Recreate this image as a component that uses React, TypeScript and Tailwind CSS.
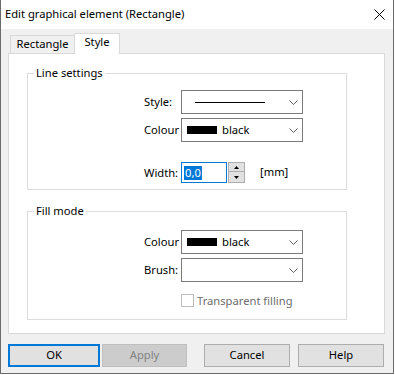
import React from "react"

const font = { fontFamily: '"Noto Sans", "Open Sans", sans-serif' }

function Chevron() {
    return (
        <svg width="9" height="5" viewBox="0 0 9 5" className="shrink-0">
            <path d="M0.5 0.5 L4.5 4.5 L8.5 0.5" fill="none" stroke="#606060" strokeWidth="1" />
        </svg>
    )
}

function Combo({ children }: { children?: React.ReactNode }) {
    return (
        <div className="flex items-center w-[122px] h-[24px] bg-white border border-[#7a7a7a] pl-[5px] pr-[4px]">
            <div className="flex-1 flex items-center min-w-0">{children}</div>
            <Chevron />
        </div>
    )
}

function ColourValue() {
    return (
        <div className="flex items-center gap-[5px]">
            <div className="w-[30px] h-[8px] bg-black" />
            <span className="text-[11.2px] leading-none text-black">black</span>
        </div>
    )
}

function Row({ label, children, className = "" }: { label: string; children: React.ReactNode; className?: string }) {
    return (
        <div className={"flex items-center " + className}>
            <span className="w-[37px] text-[11.2px] text-black leading-none">{label}</span>
            {children}
        </div>
    )
}

function Group({ title, className, children }: { title: string; className: string; children: React.ReactNode }) {
    return (
        <div className={"relative ml-[18px] w-[320px] border border-[#dcdcdc] pl-[116px] " + className}>
            <span className="absolute -top-[9px] left-[6px] bg-white px-[2px] text-[11.2px] leading-[16px] text-black">
                {title}
            </span>
            {children}
        </div>
    )
}

export default function App() {
    return (
        <div className="w-[395px] h-[375px] bg-white" style={font}>
            <div className="w-[394px] h-[374px] bg-[#f0f0f0] border-l border-r border-b border-[#6b6b6b] flex flex-col">
                {/* Title bar */}
                <div className="h-[29px] bg-white flex items-center justify-between pl-[4px] pr-[8px] shrink-0">
                    <span className="text-[11.2px] text-black">Edit graphical element (Rectangle)</span>
                    <svg width="11" height="11" viewBox="0 0 11 11">
                        <path d="M0.5 0.5 L10.5 10.5 M10.5 0.5 L0.5 10.5" stroke="#000" strokeWidth="1" />
                    </svg>
                </div>

                {/* Tabs */}
                <div className="h-[24px] flex items-end pl-[9px] shrink-0">
                    <div className="h-[18px] w-[65px] border border-b-0 border-[#d9d9d9] bg-[#f0f0f0] flex items-center justify-center text-[11.2px] text-black">
                        Rectangle
                    </div>
                    <div className="relative z-10 -mb-px -ml-px h-[21px] w-[46px] border border-b-0 border-[#d9d9d9] bg-white flex items-center justify-center pb-[3px] text-[11.2px] text-black">
                        Style
                    </div>
                </div>

                {/* Panel */}
                <div className="ml-[7px] w-[377px] h-[281px] bg-white border border-[#d9d9d9] shrink-0">
                    <Group title="Line settings" className="mt-[19px] h-[117px] pt-[16px]">
                        <Row label="Style:">
                            <Combo>
                                <div className="ml-[8px] w-[70px] h-px bg-black" />
                            </Combo>
                        </Row>
                        <Row label="Colour" className="mt-[4px]">
                            <Combo>
                                <ColourValue />
                            </Combo>
                        </Row>
                        <Row label="Width:" className="mt-[20px]">
                            <div className="flex items-center">
                                <div className="w-[46px] h-[21px] border border-[#0078d7] bg-white flex items-center pl-[2px]">
                                    <span className="bg-[#0078d7] text-white text-[11.2px] leading-[14px] px-px">0,0</span>
                                </div>
                                <div className="ml-px w-[17px] h-[21px] flex flex-col">
                                    <div className="h-[10px] border border-[#adadad] bg-[#e1e1e1] flex items-center justify-center">
                                        <svg width="5" height="3" viewBox="0 0 5 3"><path d="M2.5 0 L5 3 L0 3 Z" fill="#000" /></svg>
                                    </div>
                                    <div className="h-[11px] border border-t-0 border-[#adadad] bg-[#e1e1e1] flex items-center justify-center">
                                        <svg width="5" height="3" viewBox="0 0 5 3"><path d="M0 0 L5 0 L2.5 3 Z" fill="#000" /></svg>
                                    </div>
                                </div>
                                <span className="ml-[15px] text-[11.2px] text-black">[mm]</span>
                            </div>
                        </Row>
                    </Group>

                    <Group title="Fill mode" className="mt-[21px] h-[109px] pt-[18px]">
                        <Row label="Colour">
                            <Combo>
                                <ColourValue />
                            </Combo>
                        </Row>
                        <Row label="Brush:" className="mt-[4px]">
                            <Combo />
                        </Row>
                        <div className="flex items-center mt-[12px] ml-[37px]">
                            <div className="w-[13px] h-[13px] border border-[#bcbcbc] bg-white" />
                            <span className="ml-[3px] text-[11.2px] leading-none text-[#6d6d6d]">Transparent filling</span>
                        </div>
                    </Group>
                </div>

                {/* Buttons */}
                <div className="flex mt-[10px] ml-[7px] h-[23px] text-[11.2px]">
                    <button className="w-[92px] h-full bg-[#e1e1e1] border-2 border-[#0078d7] text-black">OK</button>
                    <button className="ml-[2px] w-[85px] h-full bg-[#cccccc] border border-[#bfbfbf] text-[#838383]">Apply</button>
                    <button className="ml-[17px] w-[86px] h-full bg-[#e1e1e1] border border-[#adadad] text-black">Cancel</button>
                    <button className="ml-[8px] w-[86px] h-full bg-[#e1e1e1] border border-[#adadad] text-black">Help</button>
                </div>
            </div>
        </div>
    )
}
